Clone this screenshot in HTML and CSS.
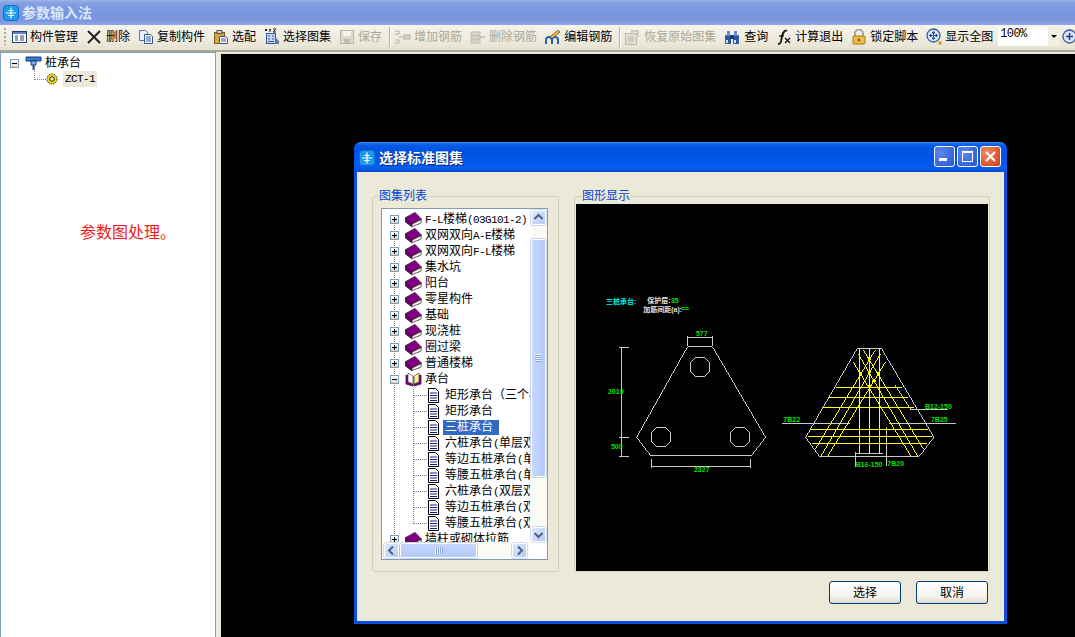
FILE: index.html
```html
<!DOCTYPE html>
<html lang="zh">
<head>
<meta charset="utf-8">
<title>参数输入法</title>
<link rel="stylesheet" href="styles.css">
</head>
<body>
<svg class="defs" width="0" height="0">
  <symbol id="appicon" viewBox="0 0 16 16">
    <rect x="0.5" y="0.5" width="15" height="15" rx="3" fill="#1a9af0" stroke="#0d6fc8"/>
    <path d="M8 2.500v11M3 8h10M5.500 5.500h5M5 10.500h6" stroke="#fff" stroke-width="1.200" fill="none"/>
  </symbol>
  <symbol id="book" viewBox="0 0 17 15">
    <path d="M.4 5.700 10 .4l6.600 6.900-9.900 5z" fill="#800080" stroke="#2a062a" stroke-width=".7"/>
    <path d="M6.700 12.300 16.600 7.300l-.9 4-9 3.400z" fill="#f0f0e8" stroke="#222" stroke-width=".7"/>
    <path d="M.4 5.700 6.700 12.300v2.400L.4 10z" fill="#6a006a" stroke="#2a062a" stroke-width=".7"/>
  </symbol>
  <symbol id="openbook" viewBox="0 0 17 15">
    <path d="M1 3 8 5v9L1 12z" fill="#800080" stroke="#2a0a2a" stroke-width=".7"/>
    <path d="M16 3 9 5v9l7-2z" fill="#800080" stroke="#2a0a2a" stroke-width=".7"/>
    <path d="M3 1 8 4v8L3 10z" fill="#fff" stroke="#333" stroke-width=".6"/>
    <path d="M14 1 9 4v8l5-2z" fill="#f6ee90" stroke="#333" stroke-width=".6"/>
  </symbol>
  <symbol id="doc" viewBox="0 0 13 15">
    <path d="M1.500.5h7l3 3v11h-10z" fill="#fff" stroke="#000"/>
    <path d="M3 5h7M3 7.500h7M3 10h7M3 12.500h7" stroke="#1a1a8c"/>
  </symbol>
</svg>

<div class="app">
  <header class="apptitle">
    <svg class="appicon" width="16" height="16"><use href="#appicon"/></svg>
    <span>参数输入法</span>
  </header>

  <nav class="toolbar">
    <i class="grip"></i>
    <div class="tool"><svg width="15" height="16" viewBox="0 0 15 16"><rect x=".5" y="2.500" width="14" height="11" fill="#fff" stroke="#24407a"/><rect x="1" y="3" width="13" height="2" fill="#5b7fc0"/><path d="M3 7h3M3 9h3M3 11h3M8 7h4M8 9h4M8 11h4" stroke="#24407a"/></svg><span>构件管理</span></div>
    <div class="tool"><svg width="17" height="16" viewBox="0 0 17 16"><path d="M2 2l12 12M14 2 2 14" stroke="#222" stroke-width="2" fill="none"/></svg><span>删除</span></div>
    <div class="tool"><svg width="16" height="16" viewBox="0 0 16 16"><path d="M1.500 1.500h6l2 2v8h-8z" fill="#eaf0fb" stroke="#5a76a8"/><path d="M6.500 5.500h6l2 2v7h-8z" fill="#fff" stroke="#34568f"/><path d="M8 8h5M8 10h5M8 12h5" stroke="#34568f"/></svg><span>复制构件</span></div>
    <div class="tool"><svg width="16" height="16" viewBox="0 0 16 16"><rect x="1.500" y="3.500" width="10" height="11" fill="#d8a840" stroke="#7c5a18"/><rect x="4" y="1.500" width="5" height="3" fill="#d0d0d0" stroke="#555"/><path d="M6.500 7.500h6l2 2v5h-8z" fill="#fff" stroke="#34568f"/><path d="M8 10h5M8 12h5" stroke="#34568f"/></svg><span>选配</span></div>
    <div class="tool"><svg width="16" height="17" viewBox="0 0 16 17"><path d="M1 1l2 2M3 1 1 3M5 1l1 1v2M7 1 6 2M9 1h3l-3 3h3" stroke="#222" fill="none"/><rect x="2.500" y="5.500" width="9" height="10" fill="#c8d8f0" stroke="#335a96"/><path d="M4 8h2M8 8h2M4 11h2M8 11h2M4 13.500h6" stroke="#335a96"/><path d="M12 10l3 3v3h-4z" fill="#5a7cb8"/></svg><span>选择图集</span></div>
    <div class="tool off"><svg width="16" height="16" viewBox="0 0 16 16"><rect x="1.500" y="1.500" width="13" height="13" fill="#dcdad0" stroke="#b8b6aa"/><rect x="4" y="2" width="8" height="5" fill="#f4f3ec"/><rect x="5" y="10" width="6" height="4" fill="#bfbdb2"/></svg><span>保存</span></div>
    <i class="sep"></i>
    <div class="tool off"><svg width="17" height="16" viewBox="0 0 17 16"><path d="M1 2h4v3H1M1 11h4v3H1M5 8h4" stroke="#b4b2a6" fill="none"/><rect x="10" y="6" width="6" height="4" fill="#d6d4c8" stroke="#b4b2a6"/></svg><span>增加钢筋</span></div>
    <div class="tool off"><svg width="16" height="16" viewBox="0 0 16 16"><path d="M1 3h9v3H1zM1 7h9v3H1zM1 11h9v3H1z" fill="#dddbcf" stroke="#bcbaae"/><path d="M10 8h5" stroke="#a8a69a"/></svg><span>删除钢筋</span></div>
    <div class="tool"><svg width="16" height="16" viewBox="0 0 16 16"><path d="M1 15v-4q0-3 3-3t3 3v4M7 15v-4q0-3 3-3t3 3v4" fill="none" stroke="#2a62b8" stroke-width="2"/><path d="M6 7l7-6 2 2-7 6-3 1z" fill="#f0b040" stroke="#333" stroke-width=".6"/></svg><span>编辑钢筋</span></div>
    <i class="sep"></i>
    <div class="tool off"><svg width="17" height="16" viewBox="0 0 17 16"><rect x="1.500" y="4.500" width="11" height="11" fill="#e2e0d4" stroke="#bcbaae"/><path d="M4 8h6M4 10h6M4 12h6" stroke="#bcbaae"/><path d="M8 5V2h6v5h-2" fill="none" stroke="#cfcdc0" stroke-width="2"/></svg><span>恢复原始图集</span></div>
    <div class="tool"><svg width="17" height="16" viewBox="0 0 17 16"><rect x="1" y="6" width="6" height="9" rx="1" fill="#2d5a9e"/><rect x="9" y="6" width="6" height="9" rx="1" fill="#2d5a9e"/><rect x="3" y="2" width="3" height="5" fill="#6a8cc8"/><rect x="10" y="2" width="3" height="5" fill="#6a8cc8"/><rect x="6" y="6" width="4" height="4" fill="#1c3a70"/><rect x="2" y="11" width="2" height="3" fill="#cfe0f8"/><rect x="10" y="11" width="2" height="3" fill="#cfe0f8"/></svg><span>查询</span></div>
    <div class="tool"><svg width="16" height="16" viewBox="0 0 16 16"><path d="M2 15q3 0 3.500-5T8 3q1-2 3-1" fill="none" stroke="#111" stroke-width="1.800"/><path d="M3 7h5" stroke="#111" stroke-width="1.200"/><path d="M9 9l5 5M14 9l-5 5" stroke="#111" stroke-width="1.300"/></svg><span>计算退出</span></div>
    <div class="tool"><svg width="16" height="16" viewBox="0 0 16 16"><path d="M4 7V4.500a4 4 0 0 1 8 0V7" fill="none" stroke="#a8a8a0" stroke-width="2"/><rect x="2" y="7" width="12" height="8" rx="1" fill="#eebb44" stroke="#a87a18"/><path d="M8 9.500v3M6.500 11h3" stroke="#6a4a08"/></svg><span>锁定脚本</span></div>
    <div class="tool"><svg width="16" height="17" viewBox="0 0 16 17"><circle cx="7.500" cy="7.500" r="6.500" fill="#d6e4f8" stroke="#3a5a98" stroke-width="1.300"/><path d="M7.500 3.500v8M3.500 7.500h8M7.500 3.500 6 5h3zM7.500 11.500 6 10h3zM3.500 7.500 5 6v3zM11.500 7.500 10 6v3z" fill="#24408a" stroke="#24408a" stroke-width=".8"/><circle cx="14" cy="15" r="1.800" fill="#e88a20"/></svg><span>显示全图</span></div>
    <div class="combo"><span class="comboval">100%</span><span class="comboarrow"></span></div>
    <svg class="trailing" width="16" height="16" viewBox="0 0 16 16"><circle cx="7.500" cy="7.500" r="6.500" fill="#d6e4f8" stroke="#3a5a98" stroke-width="1.300"/><path d="M7.500 4v7M4 7.500h7" stroke="#24408a" stroke-width="1.500"/></svg>
  </nav>

  <main class="workspace">
    <aside class="sidepanel">
      <div class="sidetree">
        <div class="siderow">
          <span class="toggle minus"></span>
          <svg width="17" height="16" viewBox="0 0 17 16"><path d="M1 2h15v4H1z" fill="#3a78d0" stroke="#123a7a"/><path d="M6 6h5v4H6z" fill="#8ab0e8" stroke="#123a7a"/><path d="M7.500 10h2v5h-2z" fill="#1f4f9e"/></svg>
          <span class="sidename">桩承台</span>
        </div>
        <div class="siderow child">
          <svg width="12" height="12" viewBox="0 0 12 12"><circle cx="6" cy="6" r="5" fill="#f0dc10" stroke="#222" stroke-dasharray="1.500 1"/><circle cx="6" cy="6" r="2.300" fill="#f4f0a0" stroke="#222"/></svg>
          <span class="sidesel">ZCT-1</span>
        </div>
      </div>
      <p class="note">参数图处理。</p>
    </aside>

    <section class="canvas">
      <div class="dialog">
        <div class="dlgtitle">
          <svg class="dlgicon" width="16" height="16"><use href="#appicon"/></svg>
          <span class="dlgname">选择标准图集</span>
          <div class="wbtns">
            <span class="wbtn"><svg width="19" height="19" viewBox="0 0 19 19"><rect x="4" y="11" width="8" height="3" fill="#fff"/></svg></span>
            <span class="wbtn"><svg width="19" height="19" viewBox="0 0 19 19"><rect x="4.500" y="4.500" width="10" height="10" fill="none" stroke="#fff"/><rect x="4" y="4" width="11" height="2" fill="#fff"/></svg></span>
            <span class="wbtn close"><svg width="19" height="19" viewBox="0 0 19 19"><path d="M5 5l9 9M14 5l-9 9" stroke="#fff" stroke-width="2.200"/></svg></span>
          </div>
        </div>
        <div class="dlgclient">
          <div class="dlgbody">
            <section class="group left">
              <h3 class="legend">图集列表</h3>
              <div class="treebox">
                <div class="treescroll">
                  <ul class="tree">
                    <li class="trow"><span class="toggle"></span><svg width="17" height="15"><use href="#book"/></svg><span class="tlabel"><b>F-L</b>楼梯<b>(03G101-2)</b></span></li>
                    <li class="trow"><span class="toggle"></span><svg width="17" height="15"><use href="#book"/></svg><span class="tlabel">双网双向<b>A-E</b>楼梯</span></li>
                    <li class="trow"><span class="toggle"></span><svg width="17" height="15"><use href="#book"/></svg><span class="tlabel">双网双向<b>F-L</b>楼梯</span></li>
                    <li class="trow"><span class="toggle"></span><svg width="17" height="15"><use href="#book"/></svg><span class="tlabel">集水坑</span></li>
                    <li class="trow"><span class="toggle"></span><svg width="17" height="15"><use href="#book"/></svg><span class="tlabel">阳台</span></li>
                    <li class="trow"><span class="toggle"></span><svg width="17" height="15"><use href="#book"/></svg><span class="tlabel">零星构件</span></li>
                    <li class="trow"><span class="toggle"></span><svg width="17" height="15"><use href="#book"/></svg><span class="tlabel">基础</span></li>
                    <li class="trow"><span class="toggle"></span><svg width="17" height="15"><use href="#book"/></svg><span class="tlabel">现浇桩</span></li>
                    <li class="trow"><span class="toggle"></span><svg width="17" height="15"><use href="#book"/></svg><span class="tlabel">圈过梁</span></li>
                    <li class="trow"><span class="toggle"></span><svg width="17" height="15"><use href="#book"/></svg><span class="tlabel">普通楼梯</span></li>
                    <li class="trow"><span class="toggle minus"></span><svg width="17" height="15"><use href="#openbook"/></svg><span class="tlabel">承台</span></li>
                    <li class="trow leaf"><svg width="13" height="15"><use href="#doc"/></svg><span class="tlabel">矩形承台（三个桩承台）</span></li>
                    <li class="trow leaf"><svg width="13" height="15"><use href="#doc"/></svg><span class="tlabel">矩形承台</span></li>
                    <li class="trow leaf"><svg width="13" height="15"><use href="#doc"/></svg><span class="tlabel selected">三桩承台</span></li>
                    <li class="trow leaf"><svg width="13" height="15"><use href="#doc"/></svg><span class="tlabel">六桩承台<b>(</b>单层双向<b>)</b></span></li>
                    <li class="trow leaf"><svg width="13" height="15"><use href="#doc"/></svg><span class="tlabel">等边五桩承台<b>(</b>单层双向<b>)</b></span></li>
                    <li class="trow leaf"><svg width="13" height="15"><use href="#doc"/></svg><span class="tlabel">等腰五桩承台<b>(</b>单层双向<b>)</b></span></li>
                    <li class="trow leaf"><svg width="13" height="15"><use href="#doc"/></svg><span class="tlabel">六桩承台<b>(</b>双层双向<b>)</b></span></li>
                    <li class="trow leaf"><svg width="13" height="15"><use href="#doc"/></svg><span class="tlabel">等边五桩承台<b>(</b>双层双向<b>)</b></span></li>
                    <li class="trow leaf last"><svg width="13" height="15"><use href="#doc"/></svg><span class="tlabel">等腰五桩承台<b>(</b>双层双向<b>)</b></span></li>
                    <li class="trow"><span class="toggle"></span><svg width="17" height="15"><use href="#book"/></svg><span class="tlabel">墙柱或砌体拉筋</span></li>
                  </ul>
                  <div class="vscroll">
                    <span class="sbtn"><svg width="15" height="15" viewBox="0 0 15 15"><path d="M3.500 9 7.500 5l4 4" fill="none" stroke="#4d6185" stroke-width="2"/></svg></span>
                    <div class="vtrack"><span class="vthumb"><i class="gripv"></i></span></div>
                    <span class="sbtn"><svg width="15" height="15" viewBox="0 0 15 15"><path d="M3.500 6 7.500 10l4-4" fill="none" stroke="#4d6185" stroke-width="2"/></svg></span>
                  </div>
                </div>
                <div class="hscroll">
                  <span class="sbtn"><svg width="15" height="15" viewBox="0 0 15 15"><path d="M9 3.500 5 7.500l4 4" fill="none" stroke="#4d6185" stroke-width="2"/></svg></span>
                  <div class="htrack"><span class="hthumb"><i class="griph"></i></span></div>
                  <span class="sbtn"><svg width="15" height="15" viewBox="0 0 15 15"><path d="M6 3.500l4 4-4 4" fill="none" stroke="#4d6185" stroke-width="2"/></svg></span>
                </div>
              </div>
            </section>
            <section class="group right">
              <h3 class="legend">图形显示</h3>
              <svg class="drawing" viewBox="576 205 412 367" width="412" height="367">
                <g transform="translate(590 285) scale(.33333)">
                  <g class="cad-grey">
                    <path d="M293 188H367L527 460 484 515H182L140 460Z"/>
                    <path d="M293 188H367M182 515H484" stroke-width="5"/>
                    <path d="M317 220h26l16 16v26l-16 16h-26l-16-16v-26z" stroke-width="5"/>
                    <path d="M200 430h26l16 16v26l-16 16h-26l-16-16v-26z" stroke-width="5"/>
                    <path d="M437 430h26l16 16v26l-16 16h-26l-16-16v-26z" stroke-width="5"/>
                    <path d="M293 160H370M293 156V185M368 156V185M94 190V518M87 190H117M87 460H117M87 518H117M184 547H481M184 524V553M481 524V553"/>
                  </g>
                  <text class="cad-t g" x="318" y="156">577</text>
                  <text class="cad-t g" x="54" y="330">2019</text>
                  <text class="cad-t g" x="63" y="495">500</text>
                  <text class="cad-t g" x="312" y="564">2327</text>
                  <text class="cad-t c" x="48" y="60">三桩承台:</text>
                  <text class="cad-t w" x="172" y="57">保护层:</text>
                  <text class="cad-t g" x="243" y="57">35</text>
                  <text class="cad-t w" x="160" y="84">加筋间距(a):</text>
                  <text class="cad-t g" x="273" y="81">==</text>
                </g>
                <g transform="translate(780 335) scale(.33333)">
                  <g class="cad-grey">
                    <path d="M232 43H304L462 310 418 367H118L77 310Z"/>
                    <path d="M6 268H210M327 268H527M345 153 393 228H503M226 355V398M226 358H308M320 280V395"/>
                  </g>
                  <g class="cad-yellow">
                    <path d="M238 43V360M268 43V360M298 43V360"/>
                    <path d="M168 160.500H365M146 190.500H383M130 220.500H402M90 286.500H443M84 307.500H455M95 328.500H441"/>
                    <path d="M250 48 430 345M235 60 412 365M220 85 392 365M286 48 106 345M301 60 124 365M316 85 144 365"/>
                    <circle cx="268" cy="75" r="4"/><circle cx="268" cy="115" r="4"/><circle cx="268" cy="157" r="4"/><circle cx="241" cy="120" r="4"/><circle cx="295" cy="120" r="4"/><circle cx="282" cy="140" r="4"/>
                  </g>
                  <text class="cad-t g" x="10" y="263">7B22</text>
                  <text class="cad-t g" x="453" y="263">7B25</text>
                  <text class="cad-t g" x="435" y="224">B12-150</text>
                  <text class="cad-t g" x="227" y="398">B16-150</text>
                  <text class="cad-t g" x="322" y="396">7B20</text>
                </g>
              </svg>
            </section>
          </div>
          <div class="dlgfoot">
            <button class="xpbtn">选择</button>
            <button class="xpbtn">取消</button>
          </div>
        </div>
      </div>
    </section>
  </main>
</div>
</body>
</html>
```
FILE: styles.css
```css
* { box-sizing: border-box; }
html, body { margin: 0; height: 100%; overflow: hidden; }
body { font: 12px/16px "Liberation Sans", "Noto Sans CJK SC", sans-serif; color: #000; background: #ece9d8; }
.defs { position: absolute; }
svg { display: block; flex: none; }
ul { list-style: none; margin: 0; padding: 0; }
h3, p { margin: 0; font-weight: normal; }

.app { display: flex; flex-direction: column; width: 1075px; height: 637px; overflow: hidden; }

.apptitle { flex: none; height: 25px; display: flex; align-items: center; gap: 3px; padding-left: 3px;
  background: linear-gradient(#9db4e6 0, #84a0e2 3px, #7694de 14px, #7c98e0 21px, #90a9e6 25px);
  color: #dbe6f8; font-weight: bold; font-size: 14px; }

.toolbar { flex: none; height: 27px; display: flex; align-items: center; gap: 8px; padding: 0 0 2px 4px;
  background: linear-gradient(#f6f4ec, #ece9dc 70%, #e4e1d0); border-bottom: 2px solid #a9a798; white-space: nowrap; }
.grip { width: 2px; height: 17px; margin-right: -2px; background: repeating-linear-gradient(#a9a798 0 2px, transparent 2px 4px); }
.tool { display: flex; align-items: center; gap: 3px; color: #000; }
.tool.off { color: #aca899; }
.sep { width: 1px; height: 20px; margin: 0 -4px 0 -1px; background: #b4b2a4; box-shadow: 1px 0 #fff; }
.combo { display: flex; flex: none; width: 62px; height: 19px; margin: 0 -6px 0 -3px; background: #fff; }
.comboval { flex: 1; padding-left: 2px; font: 12px/15px "Liberation Mono", monospace; letter-spacing: -.6px; }
.comboarrow { width: 12px; background: #f1efe4; position: relative; }
.comboarrow::after { content: ""; position: absolute; left: 3px; top: 8px; border: 3px solid transparent; border-top: 3px solid #000; border-bottom: 0; }
.trailing { margin-right: -8px; }

.workspace { flex: 1; display: flex; min-height: 0; }

.sidepanel { flex: none; width: 216px; margin-bottom: -2px; background: #fff; border: 1px solid #7f9db9; }
.sidetree { padding: 2px 0 0 9px; }
.siderow { display: flex; align-items: center; gap: 6px; height: 16px; }
.sidename { margin-left: -3px; }
.siderow.child { height: 16px; margin-left: 36px; position: relative; gap: 5px; }
.siderow.child::before { content: ""; position: absolute; left: -12px; top: -5px; width: 11px; height: 13px; border-left: 1px dotted #808080; border-bottom: 1px dotted #808080; }
.sidesel { background: #ece9d8; padding: 0 2px; height: 16px; width: 34px; font: 11px/16px "Liberation Mono", monospace; letter-spacing: -.6px; white-space: nowrap; }
.note { margin: 136px 0 0 79px; color: #f01818; font-size: 16px; line-height: 20px; white-space: nowrap; }

.canvas { flex: 1; margin: 2px 0 0 5px; background: #000; position: relative; overflow: hidden; }

.dialog { position: absolute; left: 133px; top: 88px; width: 653px; height: 482px; display: flex; flex-direction: column;
  padding: 0 3px 3px; background: #0a50dc; border-radius: 7px 7px 0 0; }
.dlgtitle { flex: none; height: 30px; margin: 0 -3px; padding: 1px 6px 0 5px; display: flex; align-items: center; gap: 4px; border-radius: 7px 7px 0 0;
  background: linear-gradient(#2f86f4 0, #0a5be6 3px, #0052e0 8px, #0058ee 20px, #0a5ef0 26px, #0046c8 30px); color: #fff; }
.dlgname { flex: 1; font-weight: bold; font-size: 14px; text-shadow: 1px 1px #0a2a80; }
.wbtns { display: flex; gap: 2px; margin-top: -3px; }
.wbtn { width: 21px; height: 21px; border: 1px solid #fff; border-radius: 3px; background: radial-gradient(circle at 30% 30%, #5a88ee, #2a55d0); }
.wbtn.close { background: radial-gradient(circle at 30% 30%, #ee8a64, #d23a14); }

.dlgclient { flex: 1; display: flex; flex-direction: column; background: #ece9d8; padding: 24px 16px 0 15px; }
.dlgbody { display: flex; gap: 15px; height: 376px; margin-right: -2px; }
.group { border: 1px solid #d0d0bf; border-radius: 3px; display: flex; flex-direction: column; }
.group.left { width: 187px; padding: 0 0 0 8px; }
.group.right { width: 416px; padding: 0 0 0 1px; }
.legend { flex: none; width: fit-content; height: 14px; margin: -8px 0 0 6px; background: #ece9d8; color: #0046d5; font-size: 12px; line-height: 14px; }
.group.left .legend { margin-left: -2px; }

.treebox { flex: none; margin-top: 5px; width: 167px; height: 352px; background: #fff; border: 1px solid #7f9db9; display: flex; flex-direction: column; overflow: hidden; }
.treescroll { flex: 1; display: flex; min-height: 0; }
.tree { flex: 1; min-width: 0; overflow: hidden; padding-top: 2px; position: relative; }
.tree::before { content: ""; position: absolute; left: 12px; top: 8px; bottom: 0; border-left: 1px dotted #808080; }
.trow { position: relative; height: 16px; display: flex; align-items: center; padding-left: 8px; gap: 3px; white-space: nowrap; }
.trow > svg { margin-left: 3px; }
.trow .toggle { z-index: 1; }
.trow.leaf { padding-left: 45px; gap: 5px; }
.trow.leaf > svg { margin-left: 0; }
.trow.leaf::before { content: ""; position: absolute; left: 31px; top: -8px; width: 13px; height: 16px; border-left: 1px dotted #808080; border-bottom: 1px dotted #808080; }
.tlabel b { font: 11px/16px "Liberation Mono", monospace; letter-spacing: -.6px; }
.tlabel.selected { background: #316ac5; color: #fff; margin-left: -2px; padding: 0 6px 0 2px; height: 15px; line-height: 15px; }

.toggle { flex: none; width: 9px; height: 9px; border: 1px solid #7f9db9; background: linear-gradient(#fff, #ddd8c8); position: relative; display: block; }
.toggle::after { content: ""; position: absolute; left: 1px; top: 3px; width: 5px; height: 1px; background: #000; }
.toggle:not(.minus)::before { content: ""; position: absolute; left: 3px; top: 1px; width: 1px; height: 5px; background: #000; }

.vscroll { flex: none; width: 17px; display: flex; flex-direction: column; padding: 1px 1px 0; background: #fbfbf5; }
.sbtn { flex: none; display: block; width: 15px; height: 15px; border: 1px solid #fff; border-radius: 2px; background: linear-gradient(135deg, #e2ebfd, #b4c8f6); box-shadow: 0 0 0 .5px #a4b8e8; }
.vscroll .sbtn svg, .hscroll .sbtn svg { margin: -1px; }
.vtrack { flex: 1; padding: 14px 0 50px; display: flex; }
.vthumb { flex: 1; width: 15px; border: 1px solid #fff; border-radius: 2px; background: linear-gradient(90deg, #c8d8fb, #b2c8f8); box-shadow: 0 0 0 .5px #98aee0; display: flex; align-items: center; justify-content: center; }
.gripv { width: 7px; height: 8px; background: repeating-linear-gradient(#eef3fe 0 1px, #8ca8e0 1px 2px); }
.hscroll { flex: none; height: 17px; display: flex; padding: 1px 2px; background: #fbfbf5; gap: 1px; width: 147px; }
.htrack { flex: 1; padding-right: 34px; display: flex; }
.hthumb { flex: 1; border: 1px solid #fff; border-radius: 2px; background: linear-gradient(#c8d8fb, #b2c8f8); box-shadow: 0 0 0 .5px #98aee0; display: flex; align-items: center; justify-content: center; }
.griph { width: 8px; height: 7px; background: repeating-linear-gradient(90deg, #eef3fe 0 1px, #8ca8e0 1px 2px); }

.drawing { margin-top: 1px; background: #000; shape-rendering: crispEdges; }
.cad-grey path { fill: none; stroke: #c8c8c8; stroke-width: 3; }
.cad-yellow path { fill: none; stroke: #ffff00; stroke-width: 3; }
.cad-yellow circle { fill: none; stroke: #ffff00; stroke-width: 3; }
.cad-t { font: 21px "Liberation Sans", "Noto Sans CJK SC", sans-serif; font-weight: bold; }
.cad-t.g { fill: #00e000; }
.cad-t.c { fill: #00f0f0; }
.cad-t.w { fill: #e0e0e0; }

.dlgfoot { display: flex; justify-content: flex-end; gap: 15px; margin-top: 9px; }
.xpbtn { width: 72px; height: 23px; padding: 0 0 3px; border: 1px solid #003c74; border-radius: 3px; background: linear-gradient(#fff, #f4f3ee 70%, #dcd8cc); font: 12px "Liberation Sans", "Noto Sans CJK SC", sans-serif; color: #000; }
```
